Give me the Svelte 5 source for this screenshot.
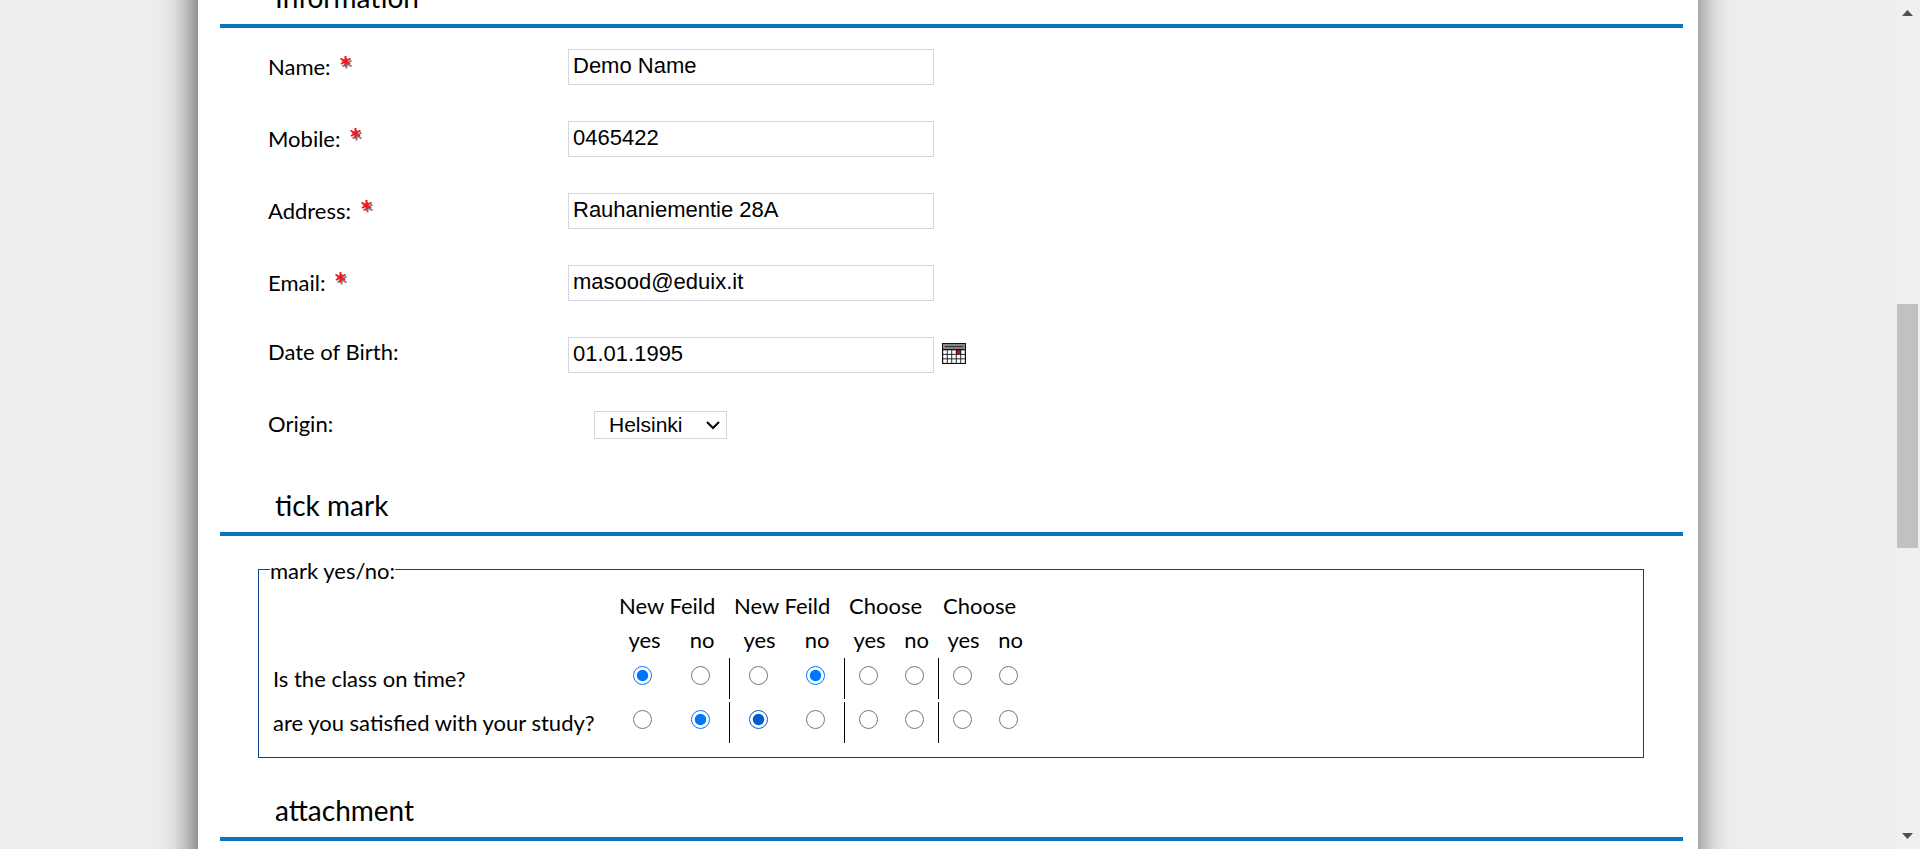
<script>
  const fields = [
    { id: 'name', label: 'Name:', value: 'Demo Name', required: true },
    { id: 'mobile', label: 'Mobile:', value: '0465422', required: true },
    { id: 'address', label: 'Address:', value: 'Rauhaniementie 28A', required: true },
    { id: 'email', label: 'Email:', value: 'masood@eduix.it', required: true },
    { id: 'birth', label: 'Date of Birth:', value: '01.01.1995', calendar: true }
  ];
  const groups = ['New Feild', 'New Feild', 'Choose', 'Choose'];
  const answers = ['yes', 'no'];
  const questions = [
    { text: 'Is the class on time?', picked: ['yes', 'no', '', ''] },
    { text: 'are you satisfied with your study?', picked: ['no', 'yes', '', ''], active: 1 }
  ];
</script>

<div class="page">
  <div class="canvas">
    <main>
      <section>
        <h2>Information</h2>
        <div class="fields">
          {#each fields as f}
            <div class="row">
              <label for={f.id} class:required={f.required}>
                {f.label}
                {#if f.required}
                  <svg class="star" viewBox="0 0 12 13" width="12" height="13" aria-hidden="true">
                    <g fill="none">
                      <path stroke="#808080" stroke-width="2" d="M6.500 2v10.500M2 4.500l9.500 6M11.500 4.500l-9 6" />
                      <path stroke="#ee1820" stroke-width="2" d="M5.500 0v10.500M.5 2.500l9.500 5.500M10.500 2.500L1 8" />
                    </g>
                  </svg>
                {/if}
              </label>
              <input class="text" id={f.id} type="text" value={f.value} />
              {#if f.calendar}
                <button type="button" class="calendar" aria-label="Choose date">
                  <svg viewBox="0 0 24 21" width="24" height="21" aria-hidden="true">
                    <path fill="#111" d="M0 0h24v21H0z" />
                    <path fill="#8a8484" d="M1 1h22v5H1z" />
                    <path fill="#333" d="M3 3h18v1H3z" />
                    {#each [0, 1, 2] as r}
                      {#each [0, 1, 2, 3, 4] as c}
                        <rect
                          x={1.2 + c * 4.5}
                          y={7.3 + r * 4.5}
                          width="3.6"
                          height="3.6"
                          fill={r === 0 && c === 3 ? '#e00000' : '#fff'}
                        />
                      {/each}
                    {/each}
                  </svg>
                </button>
              {/if}
            </div>
          {/each}
          <div class="row">
            <label for="origin">Origin:</label>
            <div class="select">
              <select id="origin"><option>Helsinki</option></select>
              <svg viewBox="0 0 14 9" width="14" height="9" aria-hidden="true">
                <path d="M1 1l6 6 6-6" fill="none" stroke="#000" stroke-width="2" />
              </svg>
            </div>
          </div>
        </div>
      </section>

      <section>
        <h2>tick mark</h2>
        <fieldset>
          <legend>mark yes/no:</legend>
          <table>
            <colgroup>
              <col class="question" />
              <col class="wide-yes" />
              <col class="wide-no" />
              <col class="wide-yes" />
              <col class="wide-no" />
              <col class="narrow" span="4" />
            </colgroup>
            <thead>
              <tr>
                <td></td>
                {#each groups as g}<th colspan="2" scope="colgroup">{g}</th>{/each}
              </tr>
              <tr>
                <td></td>
                {#each groups as _}
                  {#each answers as a}<th class="answer" scope="col">{a}</th>{/each}
                {/each}
              </tr>
            </thead>
            <tbody>
              {#each questions as q, qi}
                <tr>
                  <th scope="row">{q.text}</th>
                  {#each groups as g, gi}
                    {#each answers as a, ai}
                      <td class:divided={gi > 0 && ai === 0}>
                        <input
                          type="radio"
                          name="q{qi}g{gi}"
                          value={a}
                          checked={q.picked[gi] === a}
                          class:active={q.active === gi}
                          aria-label="{q.text} {g}: {a}"
                        />
                      </td>
                    {/each}
                  {/each}
                </tr>
              {/each}
            </tbody>
          </table>
        </fieldset>
      </section>

      <section>
        <h2>attachment</h2>
      </section>
    </main>
  </div>

  <div class="scrollbar" aria-hidden="true">
    <svg viewBox="0 0 11 6" width="11" height="6"><path d="M5.500 0L11 6H0z" fill="#505050" /></svg>
    <div class="track"><div class="thumb"></div></div>
    <svg viewBox="0 0 11 6" width="11" height="6"><path d="M0 0h11L5.500 6z" fill="#505050" /></svg>
  </div>
</div>

<style>
  :global(body) {
    background: #edeef0;
  }
  .page {
    display: flex;
    height: 100vh;
    overflow: hidden;
    color: #000;
    font: 22px/28px Lato, 'Open Sans', sans-serif;
  }
  .canvas {
    flex: 1;
    min-width: 0;
    padding: 0 197px 0 198px;
    overflow: hidden;
  }
  main {
    box-sizing: border-box;
    min-height: calc(100vh + 160px);
    margin-top: -84px;
    padding: 60px 15px 0 22px;
    background: #fff;
    box-shadow: -3px 0 32px rgba(8, 14, 8, 0.72);
  }
  h2 {
    margin: 0;
    padding: 0 0 6px 55px;
    border-bottom: 4px solid #0b76b9;
    font-size: 28px;
    font-weight: 400;
    line-height: 42px;
  }
  .fields {
    padding: 3px 0 21px 48px;
  }
  .row {
    display: flex;
    align-items: center;
    height: 72px;
  }
  label {
    width: 300px;
    padding-bottom: 6px;
  }
  label.required {
    padding-bottom: 0;
  }
  .star {
    margin-left: 4px;
    vertical-align: 6px;
  }
  input.text {
    box-sizing: border-box;
    width: 366px;
    height: 36px;
    padding: 0 4px 2px;
    border: 1px solid #d6d6dc;
    background: #fff;
    color: #000;
    font: 22px 'Liberation Sans', Arial, sans-serif;
  }
  .calendar {
    display: flex;
    margin: 0 0 4px 8px;
    padding: 0;
    border: 0;
    background: none;
  }
  .select {
    display: grid;
    align-items: center;
    margin: 0 0 4px 26px;
  }
  .select > * {
    grid-area: 1 / 1;
  }
  .select svg {
    justify-self: end;
    margin-right: 7px;
    pointer-events: none;
  }
  select {
    appearance: none;
    width: 133px;
    height: 28px;
    padding: 0 14px 2px;
    border: 1px solid #d6d6dc;
    border-radius: 0;
    background: #fff;
    color: #000;
    font: 21px 'Liberation Sans', Arial, sans-serif;
  }
  fieldset {
    margin: 17px 39px 31px 38px;
    padding: 2px 11px 11px;
    border: 1px solid #0b4384;
  }
  legend {
    padding: 4px 0 0;
  }
  table {
    table-layout: fixed;
    width: 762px;
    border-spacing: 0 3px;
  }
  col.question {
    width: 344px;
  }
  col.wide-yes {
    width: 57px;
  }
  col.wide-no {
    width: 58px;
  }
  col.narrow {
    width: 47px;
  }
  th,
  td {
    padding: 0;
    font-weight: 400;
    text-align: left;
    white-space: nowrap;
  }
  thead tr {
    height: 31px;
  }
  thead th {
    padding: 0 0 0 5px;
  }
  thead th.answer {
    padding-left: 4px;
    text-align: center;
  }
  tbody tr {
    height: 41px;
  }
  tbody th {
    padding-left: 3px;
  }
  tbody td {
    padding-bottom: 7px;
    text-align: center;
    line-height: 0;
  }
  td.divided {
    border-left: 1px solid #000;
  }
  input[type='radio'] {
    width: 19px;
    height: 19px;
    margin: 0;
    accent-color: #0075ff;
  }
  input.active {
    accent-color: #005cc8;
  }
  .scrollbar {
    box-sizing: border-box;
    display: flex;
    flex-direction: column;
    align-items: center;
    width: 25px;
    padding: 10px 0;
    background: #f0f0f0;
  }
  .track {
    display: flex;
    flex: 1;
    flex-direction: column;
    align-items: center;
    width: 100%;
  }
  .thumb {
    width: 21px;
    height: 244px;
    margin-top: 288px;
    background: #c1c1c1;
  }
</style>
